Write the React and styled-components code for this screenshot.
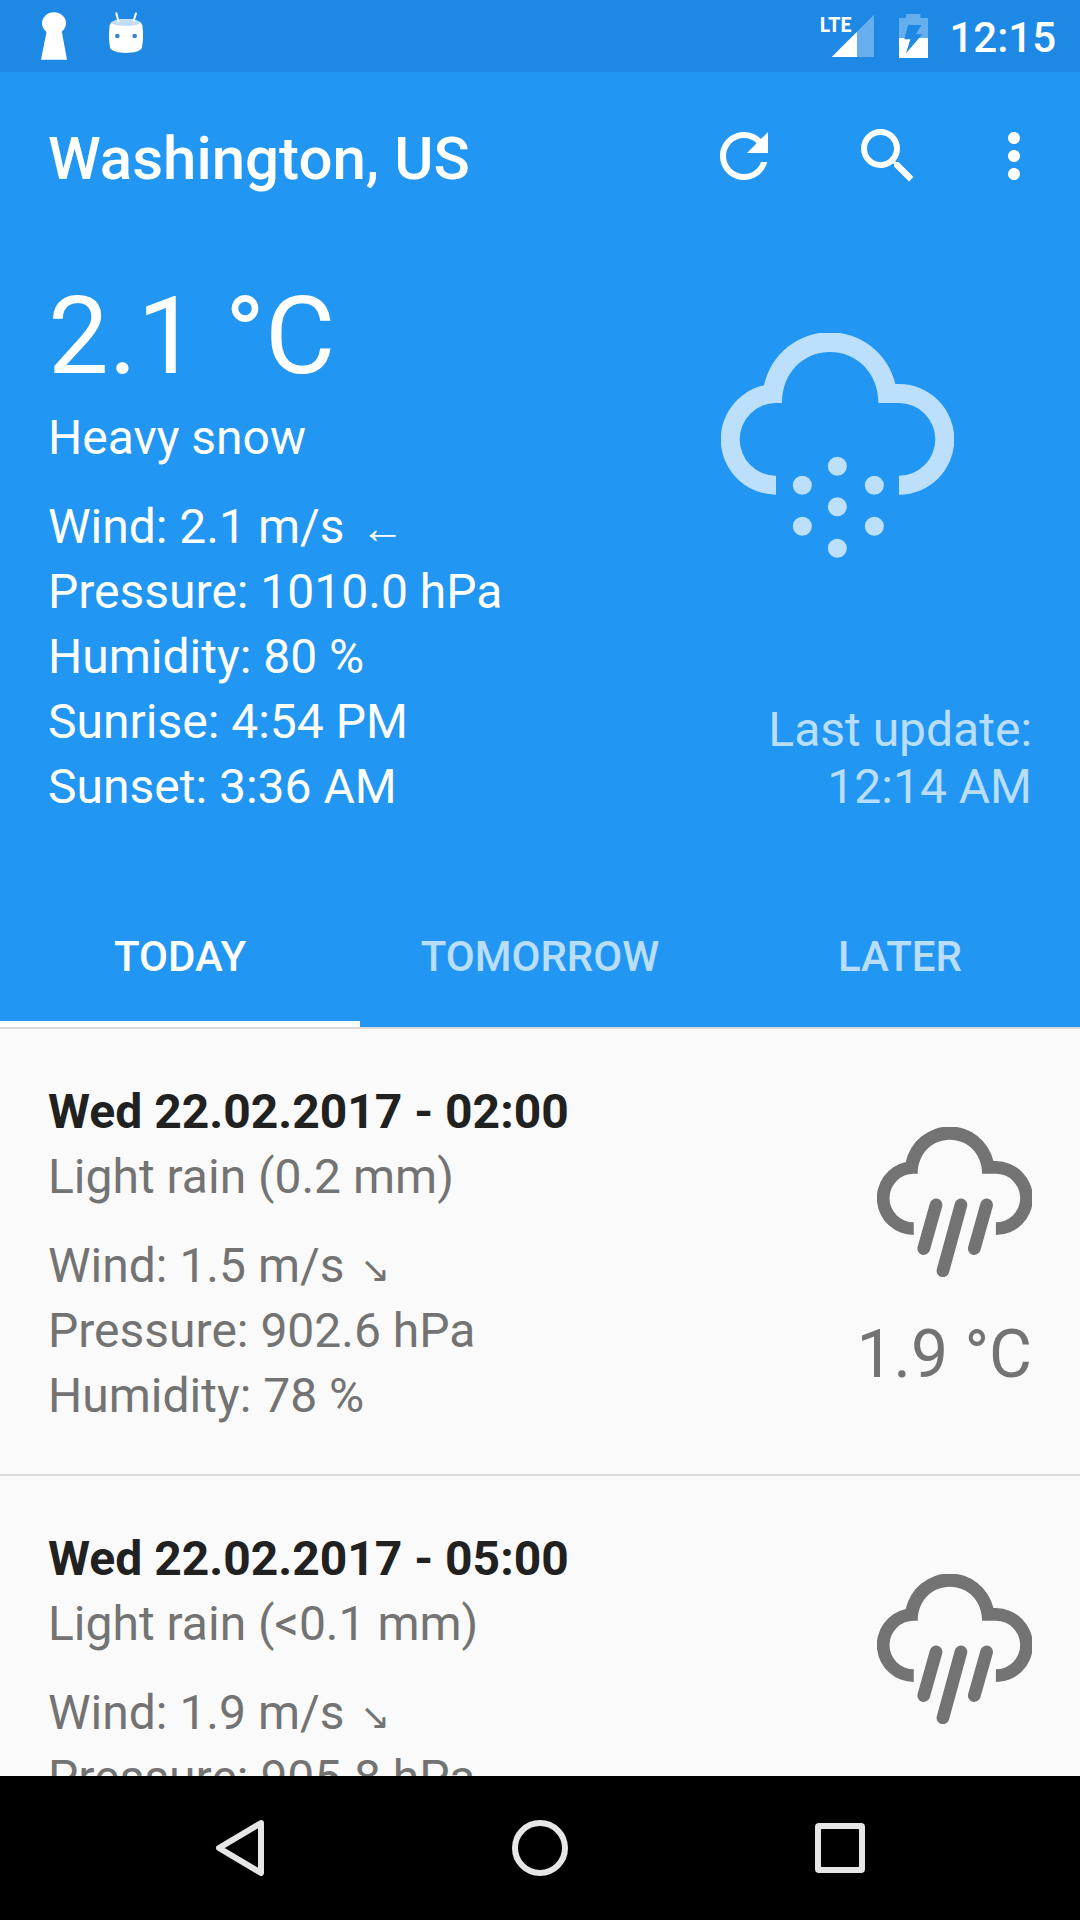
import { useState } from "react";
import styled, { createGlobalStyle } from "styled-components";
import { MdMoreVert, MdRefresh, MdSearch } from "react-icons/md";

const COLOR = {
    Primary: "#2196f3",
    PrimaryDark: "#1e88e5",
    White: "#ffffff",
    WhiteSoft: "rgba(255, 255, 255, 0.7)",
    Background: "#fafafa",
    Text: "#212121",
    TextSoft: "#737373",
    Divider: "#dadada",
    Nav: "#e6e6e6",
};

const GlobalStyle = createGlobalStyle`
    * {
        box-sizing: border-box;
    }
    body {
        margin: 0;
        font-family: Roboto, "Liberation Sans", sans-serif;
        background-color: ${COLOR.Background};
    }
    svg {
        display: block;
    }
`;

const Screen = styled.div`
    display: flex;
    flex-direction: column;
    height: 100vh;
`;

const StatusBar = styled.div`
    display: flex;
    flex-shrink: 0;
    align-items: center;
    justify-content: space-between;
    height: 72px;
    padding: 0 24px 0 40px;
    background-color: ${COLOR.PrimaryDark};
    color: ${COLOR.White};
`;
const StatusGroup = styled.div`
    display: flex;
    align-items: center;
    gap: ${({ $gap }) => $gap}px;
`;
const Clock = styled.time`
    padding-top: 4px;
    font-size: 42px;
    font-weight: 500;
    line-height: 48px;
`;
const SignalBox = styled.div`
    position: relative;
`;
const SignalLabel = styled.span`
    position: absolute;
    top: 2px;
    left: 1px;
    font-family: Lato, Roboto, sans-serif;
    font-size: 20px;
    font-weight: 900;
    line-height: 20px;
`;

const Header = styled.header`
    flex-shrink: 0;
    background-color: ${COLOR.Primary};
    color: ${COLOR.White};
`;
const Toolbar = styled.div`
    display: flex;
    align-items: center;
    height: 168px;
    padding: 0 12px 0 48px;
`;
const Title = styled.h1`
    flex: 1;
    margin: 0;
    padding-top: 6px;
    font-size: 60px;
    font-weight: 500;
    line-height: 72px;
`;
const IconButton = styled.button`
    display: flex;
    align-items: center;
    justify-content: center;
    width: ${({ $narrow }) => ($narrow ? 108 : 144)}px;
    height: 144px;
    padding: 0;
    border: 0;
    background: none;
    color: inherit;
    font-size: 72px;
    cursor: pointer;
`;

const Current = styled.section`
    display: flex;
    justify-content: space-between;
    padding: 28px 48px 64px;
`;
const CurrentSide = styled.div`
    display: flex;
    flex-direction: column;
    align-items: flex-end;
    justify-content: space-between;
    padding: 65px 0 4px;
    color: ${COLOR.WhiteSoft};
`;
const CurrentIcon = styled.div`
    width: 233px;
    margin-right: 78px;
`;
const Temperature = styled.div`
    font-size: 108px;
    line-height: 137px;
`;
const Line = styled.p`
    margin: 0;
    font-size: 48px;
    line-height: 65px;
`;
const Details = styled.div`
    margin-top: 24px;
`;
const Arrow = styled.span`
    margin-left: 4px;
    font-family: "Liberation Sans", sans-serif;
    font-size: ${({ $large }) => ($large ? 44 : 36)}px;
    line-height: 1;
`;
const LastUpdate = styled.p`
    margin: 0;
    font-size: 48px;
    line-height: 57px;
    text-align: right;
`;

const Tabs = styled.div`
    display: grid;
    grid-template-columns: repeat(3, 1fr);
`;
const Tab = styled.button`
    height: 144px;
    padding: 8px 0 0;
    border: 0;
    border-bottom: 6px solid ${({ $active }) => ($active ? COLOR.White : "transparent")};
    background: none;
    color: ${({ $active }) => ($active ? COLOR.White : COLOR.WhiteSoft)};
    font-family: inherit;
    font-size: 42px;
    font-weight: 500;
    text-transform: uppercase;
    cursor: pointer;
`;

const ForecastList = styled.ul`
    flex: 1;
    min-height: 0;
    margin: 0;
    padding: 0;
    overflow-y: auto;
    scrollbar-width: none;
    border-top: 2px solid ${COLOR.Divider};
    list-style: none;
`;
const ForecastRow = styled.li`
    display: flex;
    justify-content: space-between;
    padding: 50px 48px 46px;
    border-bottom: 2px solid ${COLOR.Divider};
    color: ${COLOR.TextSoft};
`;
const RowDate = styled.h2`
    margin: 0;
    color: ${COLOR.Text};
    font-size: 48px;
    font-weight: 700;
    line-height: 65px;
`;
const RowSide = styled.div`
    display: flex;
    flex-direction: column;
    align-items: flex-end;
    gap: 39px;
    padding-top: 48px;
`;
const RowIcon = styled.div`
    width: 155px;
`;
const RowTemperature = styled.div`
    font-size: 66px;
    line-height: 78px;
`;

const NavBar = styled.nav`
    display: grid;
    flex-shrink: 0;
    grid-template-columns: repeat(3, 1fr);
    height: 144px;
    padding: 0 90px;
    background-color: #000000;
`;
const NavButton = styled.button`
    display: flex;
    align-items: center;
    justify-content: center;
    padding: 0;
    border: 0;
    background: none;
    color: ${COLOR.Nav};
    cursor: pointer;
`;

const CLOUD =
    "M228 554A166 166 0 0 1 192 226A202 202 0 0 1 586 222H597A166 166 0 0 1 597 554V497A109 109 0 0 0 597 279H535C535 188 470 126 390 126S246 188 246 279H228A109 109 0 0 0 228 497Z";
const FLAKES = [
    [412, 469],
    [307, 526],
    [523, 526],
    [412, 590],
    [307, 649],
    [523, 649],
    [412, 715],
];

function SnowIcon() {
    return (
        <svg viewBox="63 69 699 675" width="100%" fill="currentColor" aria-hidden="true">
            <path d={CLOUD} />
            {FLAKES.map(([x, y]) => (
                <circle key={`${x}-${y}`} cx={x} cy={y} r="28.5" />
            ))}
        </svg>
    );
}

function RainIcon() {
    return (
        <svg viewBox="63 69 696 675" width="100%" fill="currentColor" aria-hidden="true">
            <path d={CLOUD} />
            <path
                d="M328 419L273 615M440 419L359 715M555 419L500 615"
                stroke="currentColor"
                strokeWidth="57"
                strokeLinecap="round"
            />
        </svg>
    );
}

function KeyholeIcon() {
    return (
        <svg viewBox="120 36 84 144" width="28" height="48" fill="currentColor" aria-hidden="true">
            <ellipse cx="162" cy="70" rx="36" ry="33" />
            <path d="M139 90H186V98L201 179H123L139 98Z" />
        </svg>
    );
}

function RobotIcon() {
    return (
        <svg viewBox="324 36 108 144" width="36" height="48" aria-hidden="true">
            <path
                d="M329 76C334 62 353 57 378 57S422 62 427 76C430 100 430 122 426 142C423 154 402 159 378 159S333 154 330 142C326 122 326 100 329 76Z"
                fill="#ffffff"
            />
            <ellipse cx="378" cy="68" rx="42" ry="10" fill="#c3dcf5" />
            <path d="M349 40L355 64M408 40L401 62" stroke="#ffffff" strokeWidth="6" strokeLinecap="round" />
            <circle cx="352" cy="108" r="7" fill="#3a87cf" />
            <circle cx="404" cy="108" r="7" fill="#3a87cf" />
        </svg>
    );
}

function Signal() {
    return (
        <SignalBox>
            <svg viewBox="54 36 180 144" width="60" height="48" fill="currentColor" aria-hidden="true">
                <path d="M171 95L222 44V171H171Z" opacity="0.32" />
                <path d="M95 171L171 95V171Z" />
            </svg>
            <SignalLabel>LTE</SignalLabel>
        </SignalBox>
    );
}

function BatteryIcon() {
    return (
        <svg viewBox="294 36 93 144" width="31" height="48" fill="currentColor" aria-hidden="true">
            <path d="M297 54H318V42H361V54H384V114H297Z" opacity="0.32" />
            <path d="M297 114H384V174H297Z" />
            <path d="M324 75H364L348 103H367L318 160L331 118H313Z" fill={COLOR.PrimaryDark} />
        </svg>
    );
}

function BackIcon() {
    return (
        <svg viewBox="0 0 60 60" width="60" height="60" fill="none" aria-hidden="true">
            <path d="M51 5L9 30L51 55Z" stroke="currentColor" strokeWidth="6" strokeLinejoin="round" />
        </svg>
    );
}

function HomeIcon() {
    return (
        <svg viewBox="0 0 60 60" width="60" height="60" fill="none" aria-hidden="true">
            <circle cx="30" cy="30" r="25" stroke="currentColor" strokeWidth="6" />
        </svg>
    );
}

function RecentIcon() {
    return (
        <svg viewBox="0 0 60 60" width="60" height="60" fill="none" aria-hidden="true">
            <rect x="8" y="8" width="44" height="44" rx="1" stroke="currentColor" strokeWidth="6" strokeLinejoin="round" />
        </svg>
    );
}

const TABS = ["Today", "Tomorrow", "Later"];

const FORECAST = [
    {
        date: "Wed 22.02.2017 - 02:00",
        description: "Light rain (0.2 mm)",
        wind: "1.5 m/s",
        pressure: "902.6 hPa",
        humidity: "78 %",
        temperature: "1.9 °C",
    },
    {
        date: "Wed 22.02.2017 - 05:00",
        description: "Light rain (<0.1 mm)",
        wind: "1.9 m/s",
        pressure: "905.8 hPa",
    },
];

function Forecast({ item }) {
    return (
        <ForecastRow>
            <div>
                <RowDate>{item.date}</RowDate>
                <Line>{item.description}</Line>
                <Details>
                    <Line>
                        Wind: {item.wind} <Arrow>↘</Arrow>
                    </Line>
                    <Line>Pressure: {item.pressure}</Line>
                    {item.humidity && <Line>Humidity: {item.humidity}</Line>}
                </Details>
            </div>
            <RowSide>
                <RowIcon>
                    <RainIcon />
                </RowIcon>
                {item.temperature && <RowTemperature>{item.temperature}</RowTemperature>}
            </RowSide>
        </ForecastRow>
    );
}

function App() {
    const [tab, setTab] = useState("Today");

    return (
        <Screen>
            <GlobalStyle />
            <StatusBar>
                <StatusGroup $gap={40}>
                    <KeyholeIcon />
                    <RobotIcon />
                </StatusGroup>
                <StatusGroup $gap={20}>
                    <Signal />
                    <BatteryIcon />
                    <Clock>12:15</Clock>
                </StatusGroup>
            </StatusBar>
            <Header>
                <Toolbar>
                    <Title>Washington, US</Title>
                    <IconButton aria-label="Refresh">
                        <MdRefresh />
                    </IconButton>
                    <IconButton aria-label="Search">
                        <MdSearch />
                    </IconButton>
                    <IconButton $narrow aria-label="More options">
                        <MdMoreVert />
                    </IconButton>
                </Toolbar>
                <Current>
                    <div>
                        <Temperature>2.1 °C</Temperature>
                        <Line>Heavy snow</Line>
                        <Details>
                            <Line>
                                Wind: 2.1 m/s <Arrow $large>←</Arrow>
                            </Line>
                            <Line>Pressure: 1010.0 hPa</Line>
                            <Line>Humidity: 80 %</Line>
                            <Line>Sunrise: 4:54 PM</Line>
                            <Line>Sunset: 3:36 AM</Line>
                        </Details>
                    </div>
                    <CurrentSide>
                        <CurrentIcon>
                            <SnowIcon />
                        </CurrentIcon>
                        <LastUpdate>
                            Last update:
                            <br />
                            12:14 AM
                        </LastUpdate>
                    </CurrentSide>
                </Current>
                <Tabs role="tablist">
                    {TABS.map((name) => (
                        <Tab
                            key={name}
                            role="tab"
                            aria-selected={tab === name}
                            $active={tab === name}
                            onClick={() => setTab(name)}
                        >
                            {name}
                        </Tab>
                    ))}
                </Tabs>
            </Header>
            <ForecastList>
                {FORECAST.map((item) => (
                    <Forecast key={item.date} item={item} />
                ))}
            </ForecastList>
            <NavBar>
                <NavButton aria-label="Back">
                    <BackIcon />
                </NavButton>
                <NavButton aria-label="Home">
                    <HomeIcon />
                </NavButton>
                <NavButton aria-label="Recent apps">
                    <RecentIcon />
                </NavButton>
            </NavBar>
        </Screen>
    );
}

export default App;
